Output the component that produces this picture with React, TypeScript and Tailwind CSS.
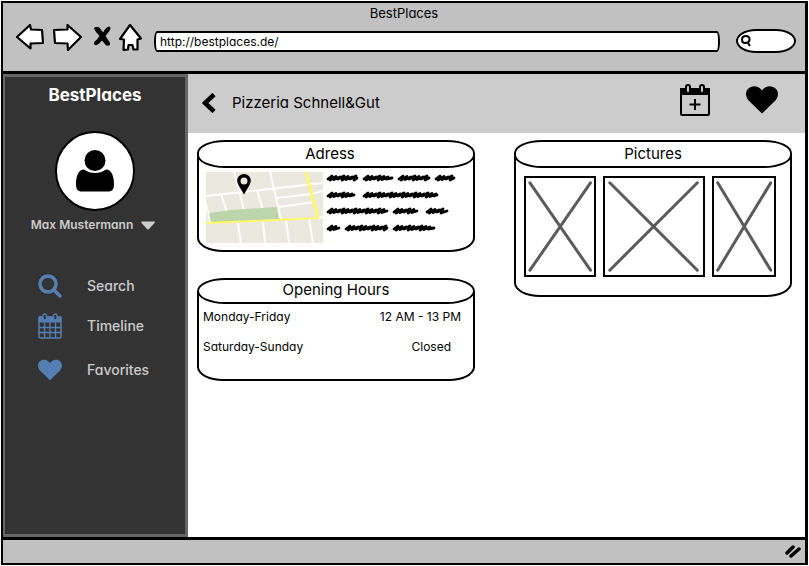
import type { ReactNode } from "react";

type Word = [x: number, y: number, width: number];

const scribbles: Word[] = [
  [1, 6, 31], [37, 6, 30], [72, 6, 32], [109, 6, 20],
  [1, 23, 28], [37, 23, 75],
  [1, 39, 61], [67, 39, 25], [100, 39, 22],
  [1, 56, 13], [19, 56, 43], [67, 56, 42],
];

function scribble([x, y, width]: Word, seed: number) {
  let d = `M${x + 1} ${y + 1}`;
  for (let i = 0; i * 4 < width - 6; i++) {
    const left = x + i * 4;
    const lift = (i * 7 + seed * 3) % 3;
    d += `L${left + 5} ${y - 2 + lift / 2}L${left + 3} ${y + 2 - lift / 2}`;
  }
  return `${d}L${x + width - 1} ${y}`;
}

function HeartIcon({ className }: { className: string }) {
  return (
    <svg viewBox="0 0 32 28" className={className} fill="currentColor" aria-hidden="true">
      <path d="M16 27.500 2.600 14.500C-.7 11-.8 5.500 2.200 2.700 5.700-.6 12-.9 16 4.500 20-.9 26.300-.6 29.800 2.700c3 2.800 2.900 8.300-.4 11.800Z" />
    </svg>
  );
}

function Card({ title, children, headerClass }: { title: string; children: ReactNode; headerClass: string }) {
  return (
    <section>
      <h2
        className={`relative flex items-center justify-center rounded-[28px/13px] border-2 border-black bg-white text-[15px] leading-5 ${headerClass}`}
      >
        {title}
      </h2>
      <div className="-mt-3 border-x-2 border-b-2 border-black pt-3 [border-bottom-left-radius:26px_14px] [border-bottom-right-radius:26px_14px]">
        {children}
      </div>
    </section>
  );
}

function Placeholder() {
  return (
    <div className="h-[101px] border-2 border-black p-0.5">
      <svg viewBox="0 0 100 100" preserveAspectRatio="none" className="h-full w-full" role="img" aria-label="Picture">
        <path
          d="M3 3 97 97M97 3 3 97"
          stroke="#5b5b5b"
          strokeWidth="3"
          strokeLinecap="round"
          vectorEffect="non-scaling-stroke"
        />
      </svg>
    </div>
  );
}

function BrowserBar() {
  return (
    <header className="border-b-[3px] border-black bg-[#c1c1c1]">
      <div className="text-center text-[13px] leading-5">BestPlaces</div>
      <div className="flex h-12 items-start pt-px pr-[9px] pl-[13px]">
        <div className="flex w-[137px] shrink-0 items-center">
          <button aria-label="Back" className="mr-[9px]">
            <svg width="28" height="28" viewBox="0 0 28 28" fill="#fff" stroke="#000" strokeWidth="2.200" strokeLinejoin="round">
              <path d="M1 13 14 1 15 5.500 26 6 27 19 14.500 19.500 14.500 24.500Z" />
            </svg>
          </button>
          <button aria-label="Forward" className="mr-3">
            <svg width="29" height="28" viewBox="0 0 29 28" fill="#fff" stroke="#000" strokeWidth="2.200" strokeLinejoin="round">
              <path d="M1 6 14.500 5.500 14.500 1 28 13 15 26 14.500 19.500 2 19Z" />
            </svg>
          </button>
          <button aria-label="Stop" className="mr-2">
            <svg width="17" height="28" viewBox="0 0 17 28">
              <path d="M.5 3.500C3 2.500 5.500 3 6.500 5L9 8.500C11 5 13 2.500 15.500 2.500c1.500 1 1.200 3-.5 5L11.500 12l4 6c1 2 .5 3.500-1 3.500-2 .5-3-.5-4-2L8 16.500 4.500 20C3 21.500.5 21.500 0 20s1-3 2.500-4L5.500 12 2 8C.5 6 0 5 .5 3.500Z" />
            </svg>
          </button>
          <button aria-label="Home">
            <svg width="23" height="28" viewBox="0 0 23 28" fill="#fff" stroke="#000" strokeWidth="2.200" strokeLinejoin="round">
              <path d="M11 1 22 14.500 18.500 15.500 18.500 25.500 14.500 25.500 13.500 21 9.500 21 9 25.500 4.500 26 5 15.500 1 15Z" />
            </svg>
          </button>
        </div>
        <input
          aria-label="Address bar"
          defaultValue="http://bestplaces.de/"
          className="mt-[7px] mr-4 ml-px h-[21px] min-w-0 flex-1 rounded-[3px/10px] border-2 border-black bg-white px-1 text-[12px]"
        />
        <label className="mt-[5px] flex h-6 w-[60px] items-center rounded-[20px/12px] border-2 border-black bg-white pl-[3px]">
          <svg width="10" height="12" viewBox="0 0 10 12" fill="none" stroke="#000" strokeWidth="2" aria-hidden="true">
            <path d="M1 4.500C1 2 3 1 5 1s4 1.500 3.500 4S6 8 4 8 1 7 1 4.500ZM7.500 6.500 7.500 9 9 11" />
          </svg>
          <input aria-label="Search the web" className="w-9 bg-transparent text-[12px] outline-none" />
        </label>
      </div>
    </header>
  );
}

function Sidebar() {
  return (
    <aside className="flex w-[185px] shrink-0 flex-col border-[3px] border-l-2 border-[#666] bg-[#333] text-[#ccc]">
      <div className="mt-2 text-center text-[17px] leading-5 font-bold text-white">BestPlaces</div>
      <div className="mt-[26px] flex h-20 w-20 items-center justify-center self-center rounded-full border-2 border-black bg-white">
        <svg width="38" height="42" viewBox="0 0 38 42" aria-label="User">
          <circle cx="19" cy="10.500" r="10.500" />
          <path d="M8 19.500c7 4.800 15 4.800 22 0 6 0 8 8 8 14.500 0 5-1.500 7.500-6 7.500H6c-4.500 0-6-2.500-6-7.500 0-6.500 2-14.500 8-14.500Z" />
        </svg>
      </div>
      <button className="mt-1 flex items-center justify-center gap-2 pr-1 text-[12px] leading-5 font-semibold">
        Max Mustermann
        <svg width="14" height="9" viewBox="0 0 14 9" fill="currentColor" aria-hidden="true">
          <path d="M.5.5h13c.5.5.5 1 0 1.500L8 8Q7 9 6 8L.5 2Q0 1 .5.500Z" />
        </svg>
      </button>
      <nav className="mt-[31px] flex flex-col pl-[33px] text-[14px] leading-5 font-medium">
        <a href="#search" className="flex h-10 items-center gap-[25px]">
          <svg width="24" height="24" viewBox="0 0 24 24" fill="none" stroke="#557fb3" aria-hidden="true">
            <circle cx="10" cy="10" r="8" strokeWidth="3.500" />
            <path d="m16 16 6 6" strokeWidth="3.500" strokeLinecap="round" />
          </svg>
          Search
        </a>
        <a href="#timeline" className="flex h-10 items-center gap-[25px]">
          <svg width="24" height="26" viewBox="0 0 24 26" fill="none" stroke="#557fb3" aria-hidden="true">
            <rect x="1" y="4" width="22" height="21" rx="1" strokeWidth="1.500" />
            <path d="M1 4h22v5H1Z" fill="#557fb3" />
            <path d="M1 14.500h22M1 19.500h22M6.500 9v16M12 9v16M17.500 9v16" strokeWidth="1.300" />
            <rect x="5" y="1" width="3.500" height="6" rx="1.700" fill="#333" strokeWidth="1.300" />
            <rect x="15.500" y="1" width="3.500" height="6" rx="1.700" fill="#333" strokeWidth="1.300" />
          </svg>
          Timeline
        </a>
        <a href="#favorites" className="mt-1 flex h-10 items-center gap-[25px]">
          <HeartIcon className="h-[22px] w-6 text-[#557fb3]" />
          Favorites
        </a>
      </nav>
    </aside>
  );
}

function CityMap() {
  return (
    <svg width="117" height="71" viewBox="0 0 117 71" className="shrink-0" role="img" aria-label="Map">
      <rect width="117" height="71" fill="#ebe8e0" />
      <path
        d="M0 24 117 11M28 0 38 38M64 0 75 48M15 22 21 40M51 18 57 38M71 26 105 22 117 19M73 35 108 30M0 32 5 52M32 51 35 71M57 49 59 71M80 47 83 71M103 46 107 71M112 46 117 45"
        fill="none"
        stroke="#fff"
        strokeWidth="2"
      />
      <path d="M3 41 25 38 71 35 73 47 5 51Z" fill="#bdd5ab" />
      <path d="M0 51 50 49 112 46" fill="none" stroke="#fff86b" strokeWidth="2" />
      <path d="M100 0 112 46" stroke="#fff86b" strokeWidth="3" />
      <path
        fillRule="evenodd"
        d="M38 22.500 32.500 13C29 7 33 2 38 2s9 5 5.500 11ZM38 5.500a3.500 3.500 0 1 0 0 7 3.500 3.500 0 0 0 0-7Z"
      />
    </svg>
  );
}

export default function App() {
  return (
    <div className="flex min-h-screen flex-col bg-white p-px font-['Inter','Noto_Sans',sans-serif] text-black [font-feature-settings:'cv11']">
      <div className="flex flex-1 flex-col border-2 border-r-[3px] border-black">
        <BrowserBar />
        <div className="flex flex-1">
          <Sidebar />
          <main className="min-w-0 flex-1">
            <div className="flex h-[59px] items-center bg-[#ccc] pr-[27px] pb-0.5 pl-[14px]">
              <button aria-label="Go back" className="mr-4">
                <svg width="14" height="20" viewBox="0 0 14 20" fill="none" stroke="#000" strokeWidth="4.500">
                  <path d="M12 1.500 3 10l9 8.500" />
                </svg>
              </button>
              <h1 className="flex-1 text-[15px] leading-5">Pizzeria Schnell&amp;Gut</h1>
              <button aria-label="Add to calendar" className="mr-9 mb-1.5">
                <svg width="30" height="32" viewBox="0 0 30 32" fill="none" stroke="#000" strokeWidth="2">
                  <rect x="1" y="5" width="28" height="26" rx="1" />
                  <path d="M1 5h28v5H1Z" fill="#000" />
                  <path d="M15 15v11M9.500 20.500h11" />
                  <rect x="6" y="1" width="4" height="8" rx="2" fill="#ccc" />
                  <rect x="20" y="1" width="4" height="8" rx="2" fill="#ccc" />
                </svg>
              </button>
              <button aria-label="Favorite">
                <HeartIcon className="mb-1.5 h-7 w-8" />
              </button>
            </div>
            <div className="grid grid-cols-2 items-start gap-x-[39px] pt-[7px] pr-[13px] pl-[9px]">
              <div className="flex flex-col gap-[26px]">
                <Card title="Adress" headerClass="h-7 pr-3">
                  <div className="flex gap-[3px] pt-1 pb-[7px] pl-[7px]">
                    <CityMap />
                    <svg width="132" height="64" viewBox="0 0 132 64" role="img" aria-label="Address text">
                      {scribbles.map((word, i) => (
                        <path
                          key={i}
                          d={scribble(word, i)}
                          fill="none"
                          stroke="#000"
                          strokeWidth="2.800"
                          strokeLinecap="round"
                          strokeLinejoin="round"
                        />
                      ))}
                    </svg>
                  </div>
                </Card>
                <Card title="Opening Hours" headerClass="h-[26px] pb-0.5">
                  <table className="mb-[15px] w-full text-[12px] leading-5">
                    <tbody>
                      <tr className="h-[30px]">
                        <th scope="row" className="pb-1 pl-1 text-left font-normal">Monday-Friday</th>
                        <td className="pr-3 pb-1 text-right">12 AM - 13 PM</td>
                      </tr>
                      <tr className="h-[30px]">
                        <th scope="row" className="pb-1 pl-1 text-left font-normal">Saturday-Sunday</th>
                        <td className="pr-[22px] pb-1 text-right">Closed</td>
                      </tr>
                    </tbody>
                  </table>
                </Card>
              </div>
              <Card title="Pictures" headerClass="h-7">
                <div className="grid grid-cols-[73fr_102fr_65fr] gap-[7px] pt-2 pr-[14px] pb-[18px] pl-2">
                  <Placeholder />
                  <Placeholder />
                  <Placeholder />
                </div>
              </Card>
            </div>
          </main>
        </div>
        <footer className="flex h-[26px] items-center justify-end border-t-[3px] border-black bg-[#c1c1c1] pr-1">
          <svg width="16" height="13" viewBox="0 0 16 13" stroke="#000" strokeWidth="3.500" strokeLinecap="round" aria-hidden="true">
            <path d="M2 8 8 2M6 11 14 4" />
          </svg>
        </footer>
      </div>
    </div>
  );
}
